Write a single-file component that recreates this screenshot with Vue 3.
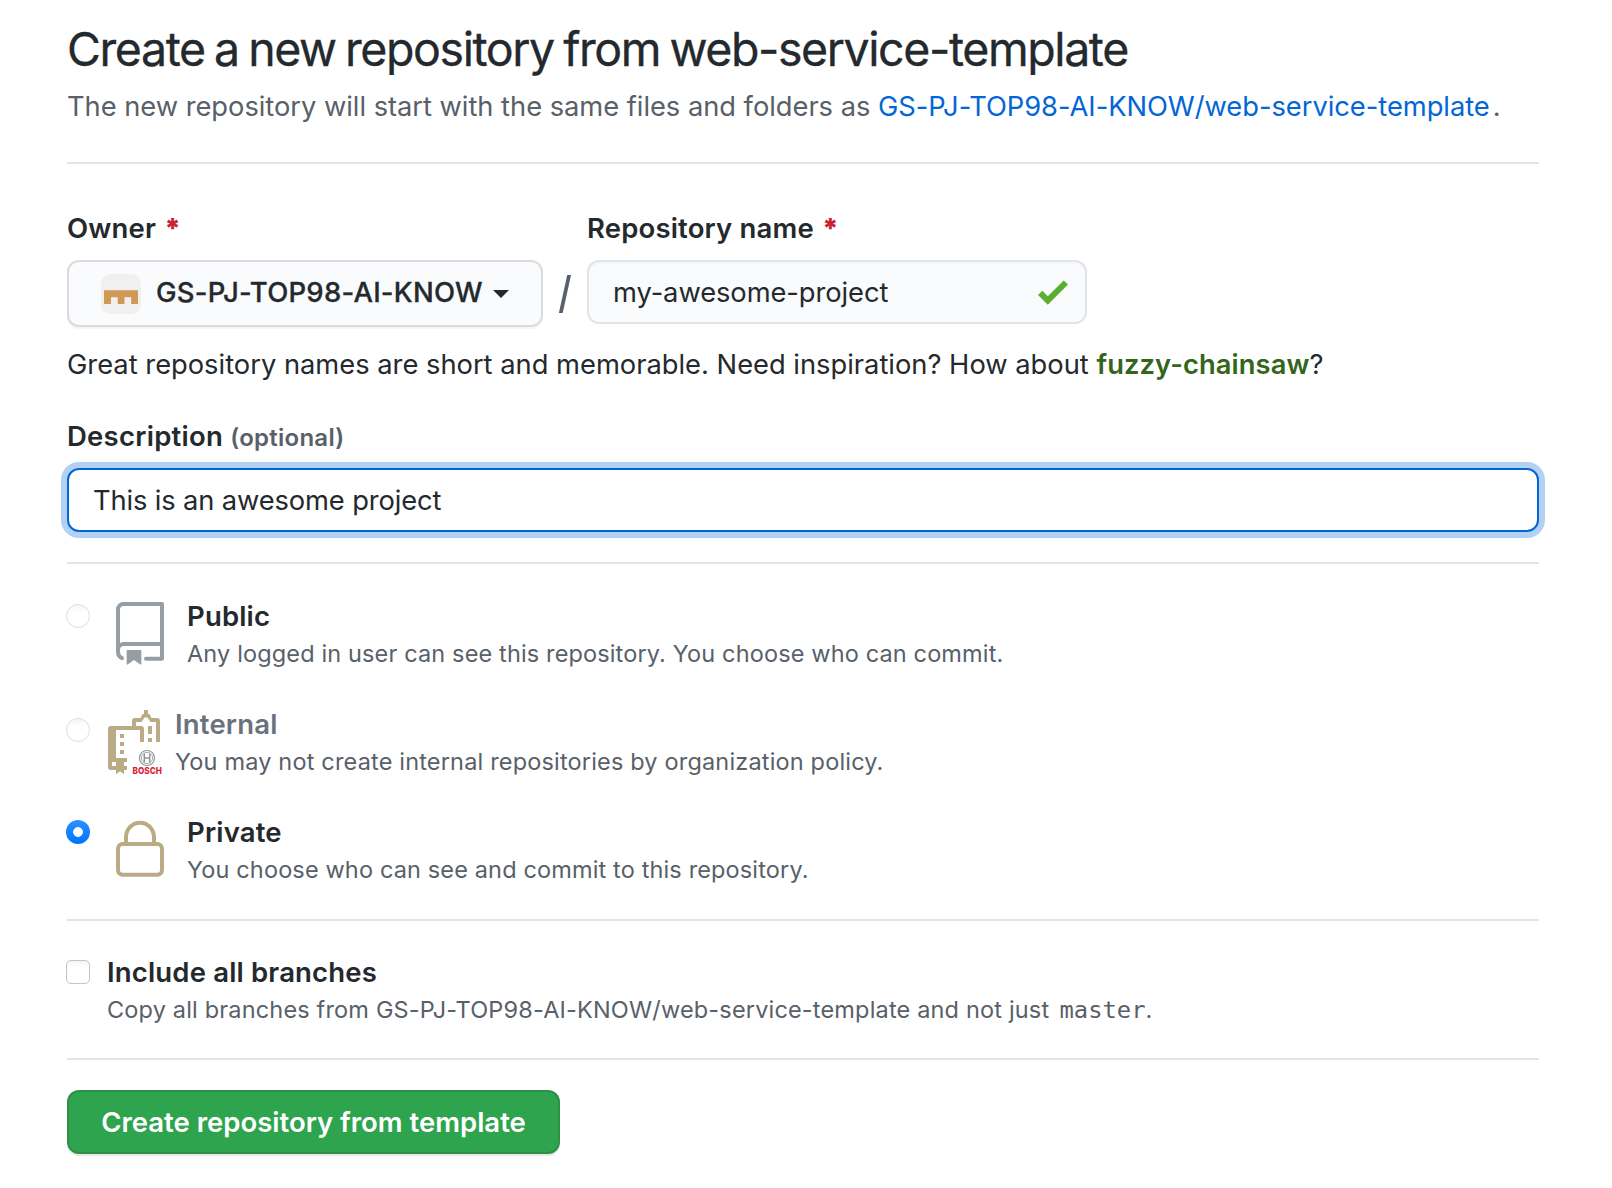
<script setup>
import { ref } from 'vue'

const name = ref('my-awesome-project')
const description = ref('This is an awesome project')
const visibility = ref('private')
const allBranches = ref(false)

const options = [
  { id: 'public', title: 'Public', note: 'Any logged in user can see this repository. You choose who can commit.' },
  { id: 'internal', title: 'Internal', note: 'You may not create internal repositories by organization policy.', disabled: true },
  { id: 'private', title: 'Private', note: 'You choose who can see and commit to this repository.' },
]
</script>

<template>
  <main class="page">
    <header class="head">
      <h1>Create a new repository from web-service-template</h1>
      <p class="lead">The new repository will start with the same files and folders as <a href="#">GS-PJ-TOP98-AI-KNOW/web-service-template</a><span class="stop">.</span></p>
    </header>

    <section class="naming">
      <div class="field owner">
        <label class="label">Owner <span class="req">*</span></label>
        <button type="button" class="owner-btn">
          <svg class="avatar" width="40" height="40" viewBox="0 0 40 40">
            <rect width="40" height="40" rx="10" fill="#f0f0f0" />
            <path d="M3 16.3h34V30h-6.8v-6.700h-6.700V30h-6.800v-6.700H10V30H3z" fill="#d19856" />
          </svg>
          <span class="owner-name">GS-PJ-TOP98-AI-KNOW</span>
          <span class="caret"></span>
        </button>
      </div>
      <svg class="slash" width="14" height="40" viewBox="0 0 14 40"><path d="M9.200 1H13L4.700 39H.9z" fill="#586069" /></svg>
      <div class="field">
        <label class="label">Repository name <span class="req">*</span></label>
        <div class="name-box">
          <input v-model="name" class="input name-input" type="text" spellcheck="false" />
          <svg class="check" width="32" height="25" viewBox="0 0 32 25"><path d="M26.700 0.500L31 4.500L10.800 24.800L1 15L5.300 10.800L10.800 16.300z" fill="#5aaf33" /></svg>
        </div>
      </div>
    </section>

    <p class="hint">Great repository names are short and memorable. Need inspiration? How about <strong>fuzzy-chainsaw</strong>?</p>

    <section class="desc">
      <label class="label">Description <span class="optional">(optional)</span></label>
      <input v-model="description" class="input desc-input" type="text" spellcheck="false" />
    </section>

    <section class="choices">
      <label v-for="o in options" :key="o.id" class="choice" :class="o.id">
        <input v-model="visibility" class="radio" type="radio" name="visibility" :value="o.id" :disabled="o.disabled" />
        <svg v-if="o.id === 'public'" class="icon" width="64" height="64" viewBox="0 0 24 24" fill="#959da5">
          <path fill-rule="evenodd" d="M3 2.750A2.750 2.750 0 015.750 0h14.500a.75.75 0 01.75.75v20.500a.75.75 0 01-.75.75h-6a.75.75 0 010-1.500h5.250v-4H6A1.500 1.500 0 004.500 18v.75c0 .716.43 1.334 1.050 1.605a.75.75 0 01-.6 1.374A3.250 3.250 0 013 18.750v-16zM19.500 1.500V15H6c-.546 0-1.059.146-1.500.401V2.750c0-.69.56-1.250 1.250-1.250H19.500z" />
          <path d="M7 18.250a.25.25 0 01.25-.25h5a.25.25 0 01.25.25v5.010a.25.25 0 01-.397.201l-2.206-1.604a.25.25 0 00-.294 0L7.397 23.460a.25.25 0 01-.397-.2v-5.010z" />
        </svg>
        <svg v-else-if="o.id === 'internal'" class="icon" width="56" height="66" viewBox="0 0 56 66">
          <g fill="#b9ab83">
            <path d="M36 0h4v4h1.500l2 4H49q3 0 3 3v21h-4V12h-5.500l-3-4.500h-3L33.500 12H28v4h-4v-5q0-3 3-3h5.500l2-4H36z" />
            <path d="M3 16h30q3 0 3 3v13h-4V20H8v28h11v4h-3v4h3v4h-3v4.300l-4-3-4 3V60H3q-3 0-3-3V19q0-3 3-3zM4 52v4h4v-4z" fill-rule="evenodd" />
            <path d="M12 24h4v4h-4zM12 32h4v4h-4zM12 40h4v4h-4zM40 16h4v8h-4zM40 28h4v4h-4z" />
          </g>
          <g fill="none" stroke="#8f9596">
            <circle cx="39" cy="48" r="7.500" stroke-width="1.200" />
            <circle cx="39" cy="48" r="5.600" stroke-width=".8" />
            <path d="M36.300 43.500v9M41.700 43.500v9M36.300 48h5.400" stroke-width="1.500" />
          </g>
          <text x="24.500" y="63.700" textLength="29.500" lengthAdjust="spacingAndGlyphs" class="brand">BOSCH</text>
        </svg>
        <svg v-else class="icon" width="64" height="64" viewBox="0 0 24 24" fill="#b9ab83">
          <path fill-rule="evenodd" d="M6 9V7.250C6 3.845 8.503 1 12 1s6 2.845 6 6.250V9h.5a2.500 2.500 0 012.500 2.500v8a2.500 2.500 0 01-2.500 2.500h-13A2.500 2.500 0 013 19.500v-8A2.500 2.500 0 015.500 9H6zm1.500-1.750C7.500 4.580 9.422 2.500 12 2.500c2.578 0 4.500 2.080 4.500 4.750V9h-9V7.250zm-3 4.250a1 1 0 011-1h13a1 1 0 011 1v8a1 1 0 01-1 1h-13a1 1 0 01-1-1v-8z" />
        </svg>
        <span class="text">
          <span class="title">{{ o.title }}</span>
          <span class="note">{{ o.note }}</span>
        </span>
      </label>
    </section>

    <section class="branches">
      <label class="choice">
        <input v-model="allBranches" class="checkbox" type="checkbox" />
        <span class="text">
          <span class="title">Include all branches</span>
          <span class="note">Copy all branches from GS-PJ-TOP98-AI-KNOW/web-service-template and not just <code>master</code>.</span>
        </span>
      </label>
    </section>

    <button type="button" class="submit">Create repository from template</button>
  </main>
</template>

<style>
body { background: #fff; }
</style>

<style scoped>
.page {
  box-sizing: border-box;
  width: 1612px;
  height: 1188px;
  padding: 19px 73px 0 67px;
  overflow: hidden;
  background: #fff;
  color: #24292e;
  font: 400 27.3px/42px Inter, "Liberation Sans", sans-serif;
}
h1, p { margin: 0; white-space: nowrap; }
.head { height: 143px; border-bottom: 2px solid #e1e4e8; }
h1 { font-size: 46.5px; font-weight: 400; line-height: 60px; letter-spacing: -1.42px; word-spacing: -2.3px; -webkit-text-stroke: .3px #24292e; }
.lead { margin-top: 7px; color: #586069; letter-spacing: -.03px; }
a { color: #0366d6; text-decoration: none; }
.stop { margin-left: 3px; }

.naming { display: flex; align-items: flex-start; padding-top: 43px; }
.field { display: flex; flex-direction: column; align-items: flex-start; }
.label { display: block; font-size: 27.5px; font-weight: 600; letter-spacing: .17px; white-space: nowrap; }
.req { color: #cb2431; margin-left: 1px; font-weight: 900; }
.owner-btn {
  display: flex;
  align-items: center;
  box-sizing: border-box;
  width: 476px;
  height: 67px;
  margin-top: 11px;
  padding: 0 0 2px 32px;
  border: 2px solid #d9dbde;
  border-radius: 12px;
  background: #fafbfc;
  box-shadow: 0 2px 0 rgba(27, 31, 35, .04);
  color: #24292e;
  font: 500 27.5px/42px Inter, "Liberation Sans", sans-serif;
  letter-spacing: .22px;
}
.avatar { margin: 2px 15px 0 0; }
.owner-name { margin-bottom: 2px; -webkit-text-stroke: .3px #24292e; }
.caret { margin: 2px 0 0 10px; border: 8px solid transparent; border-top-color: #24292e; border-bottom: 0; }
.slash { margin: 67px 15px 0 15px; }
.name-box { position: relative; margin-top: 11px; }
.input {
  display: block;
  box-sizing: border-box;
  height: 64px;
  padding: 0 24px;
  border: 2px solid #e1e4e8;
  border-radius: 12px;
  outline: 0;
  color: #24292e;
  font: 400 27.3px/42px Inter, "Liberation Sans", sans-serif;
}
.name-input { width: 500px; background: #fafbfc; box-shadow: inset 0 2px 0 rgba(225, 228, 232, .2); letter-spacing: -.07px; }
.check { position: absolute; right: 18px; top: 20px; }
.hint { margin-top: 17px; }
.hint strong { color: #33651a; font-weight: 600; letter-spacing: .1px; }

.desc { padding: 29px 0 30px; border-bottom: 2px solid #e1e4e8; }
.desc .label { height: 42px; letter-spacing: .25px; }
.optional { color: #586069; font-size: 24px; }
.desc-input { width: 1472px; margin-top: 11px; border-color: #0366d6; background: #fff; box-shadow: 0 0 0 6px #b3d1f3; letter-spacing: -.13px; }

.choices { display: flex; flex-direction: column; gap: 35px; padding: 34px 0 32px; border-bottom: 2px solid #e1e4e8; }
.choice { display: flex; align-items: flex-start; height: 73px; }
.icon { flex: none; margin: 4px 15px 0 18px; overflow: visible; }
.internal .icon { margin-right: 11px; }
.radio, .checkbox {
  appearance: none;
  flex: none;
  box-sizing: border-box;
  width: 24px;
  height: 24px;
  margin: 6px 0 0 -1px;
  border: 1px solid #c4c4c4;
  background: linear-gradient(#f6f6f6, #fff 35%);
}
.radio { border-radius: 50%; border-color: #dedede; }
.internal .radio { margin-top: 12px; }
.radio:checked { border: 0; background: radial-gradient(circle, #fff 4.500px, transparent 5.200px), linear-gradient(#2b92ff, #0074ff); }
.checkbox { border-radius: 5px; }
.text { display: flex; flex-direction: column; white-space: nowrap; }
.title { font-size: 27.5px; font-weight: 600; line-height: 36px; letter-spacing: .17px; }
.internal .title { color: #6a737d; }
.note { margin-top: 2px; color: #586069; font-size: 23.5px; line-height: 36px; letter-spacing: .14px; }
.internal .note, .branches .note { letter-spacing: .17px; }
.brand { fill: #dc1f36; font: 800 9.500px Inter, sans-serif; }
code { font: 23.8px/1 "DejaVu Sans Mono", monospace; letter-spacing: 0; margin-left: 3.500px; }

.branches { padding: 33px 0 31px; border-bottom: 2px solid #e1e4e8; }
.branches .text { margin-left: 17px; }
.submit {
  box-sizing: border-box;
  display: block;
  width: 493px;
  height: 64px;
  margin-top: 30px;
  padding: 0;
  border: 2px solid #2a9147;
  border-radius: 12px;
  background: #2ea44f;
  box-shadow: 0 2px 0 rgba(27, 31, 35, .1);
  color: #fff;
  font: 600 27.5px/60px Inter, "Liberation Sans", sans-serif;
}
</style>
